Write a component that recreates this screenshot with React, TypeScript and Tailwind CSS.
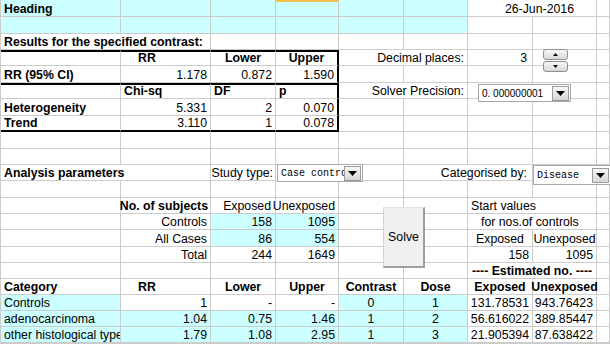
import clsx from "clsx";

type Cell = {
  t?: string;
  s?: 2; // span two columns
  a?: "l" | "r" | "c";
  b?: boolean;
  bg?: boolean;
  x?: string; // extra classes (borders, padding)
};

const TOP = "border-t-2 border-t-black";
const RIGHT = "border-r-2 border-r-black";
const BOTTOM = "border-b-2 border-b-black";

// one entry per sheet row, columns A..I
const rows: Cell[][] = [
  [
    { t: "Heading", b: true, bg: true },
    { bg: true },
    { bg: true },
    { bg: true, x: "border-t-2 border-t-[#f4c04c]" },
    { bg: true },
    { bg: true },
    { t: "26-Jun-2016", s: 2, a: "r", x: "pr-[22px]" },
  ],
  [{ bg: true }, { bg: true }, { bg: true }, { bg: true }, { bg: true }, { bg: true }],
  [{ t: "Results for the specified contrast:", s: 2, b: true }],
  [
    { x: TOP },
    { t: "RR", b: true, x: `${TOP} pl-[17px]` },
    { t: "Lower", b: true, a: "c", x: TOP },
    { t: "Upper", b: true, a: "c", x: `${TOP} ${RIGHT}` },
    { t: "Decimal places:", s: 2, a: "r" },
    { t: "3", a: "r", x: "pr-[5px]" },
  ],
  [
    { t: "RR (95% CI)", b: true },
    { t: "1.178", a: "r" },
    { t: "0.872", a: "r" },
    { t: "1.590", a: "r", x: RIGHT },
  ],
  [
    { x: TOP },
    { t: "Chi-sq", b: true, x: TOP },
    { t: "DF", b: true, x: TOP },
    { t: "p", b: true, x: `${TOP} ${RIGHT}` },
    { t: "Solver Precision:", s: 2, a: "r" },
  ],
  [
    { t: "Heterogeneity", b: true },
    { t: "5.331", a: "r" },
    { t: "2", a: "r" },
    { t: "0.070", a: "r", x: RIGHT },
  ],
  [
    { t: "Trend", b: true, x: BOTTOM },
    { t: "3.110", a: "r", x: BOTTOM },
    { t: "1", a: "r", x: BOTTOM },
    { t: "0.078", a: "r", x: `${BOTTOM} ${RIGHT}` },
  ],
  [],
  [],
  [
    { t: "Analysis parameters", s: 2, b: true },
    { t: "Study type:", a: "r", x: "pr-[2px]" },
    {},
    {},
    { t: "Categorised by:", s: 2, a: "r", x: "pr-[5px]" },
  ],
  [],
  [
    {},
    { t: "No. of subjects", b: true, a: "r", x: "pr-[2px]" },
    { t: "Exposed", a: "r", x: "pr-[4px]" },
    { t: "Unexposed", a: "r", x: "px-[1px]" },
    {},
    {},
    { t: "Start values", s: 2 },
  ],
  [
    {},
    { t: "Controls", a: "r" },
    { t: "158", a: "r", bg: true },
    { t: "1095", a: "r", bg: true },
    {},
    {},
    { t: "for nos.of controls", s: 2, x: "pl-[13px]" },
  ],
  [
    {},
    { t: "All Cases", a: "r" },
    { t: "86", a: "r", bg: true },
    { t: "554", a: "r", bg: true },
    {},
    {},
    { t: "Exposed", a: "c" },
    { t: "Unexposed", a: "c" },
  ],
  [
    {},
    { t: "Total", a: "r" },
    { t: "244", a: "r" },
    { t: "1649", a: "r" },
    {},
    {},
    { t: "158", a: "r" },
    { t: "1095", a: "r" },
  ],
  [{}, {}, {}, {}, {}, {}, { t: "---- Estimated no. ----", s: 2, a: "c", b: true }],
  [
    { t: "Category", b: true },
    { t: "RR", b: true, x: "pl-[17px]" },
    { t: "Lower", b: true, a: "c" },
    { t: "Upper", b: true, a: "c" },
    { t: "Contrast", b: true, a: "c" },
    { t: "Dose", b: true, a: "c" },
    { t: "Exposed", b: true, a: "c" },
    { t: "Unexposed", b: true, a: "c" },
  ],
  [
    { t: "Controls", bg: true },
    { t: "1", a: "r" },
    { t: "-", a: "r" },
    { t: "-", a: "r" },
    { t: "0", a: "c", bg: true },
    { t: "1", a: "c", bg: true },
    { t: "131.78531", a: "r" },
    { t: "943.76423", a: "r" },
  ],
  [
    { t: "adenocarcinoma", bg: true },
    { t: "1.04", a: "r", bg: true },
    { t: "0.75", a: "r", bg: true },
    { t: "1.46", a: "r", bg: true },
    { t: "1", a: "c", bg: true },
    { t: "2", a: "c", bg: true },
    { t: "56.616022", a: "r" },
    { t: "389.85447", a: "r" },
  ],
  [
    { t: "other histological type", bg: true, x: "overflow-hidden" },
    { t: "1.79", a: "r", bg: true },
    { t: "1.08", a: "r", bg: true },
    { t: "2.95", a: "r", bg: true },
    { t: "1", a: "c", bg: true },
    { t: "3", a: "c", bg: true },
    { t: "21.905394", a: "r" },
    { t: "87.638422", a: "r" },
  ],
  [],
];

function fill(row: Cell[]): Cell[] {
  const used = row.reduce((n, c) => n + (c.s ?? 1), 0);
  return [...row, ...Array.from({ length: Math.max(0, 9 - used) }, () => ({}))];
}

function Arrow({ up }: { up?: boolean }) {
  return (
    <svg width="5" height="3" viewBox="0 0 5 3">
      <path d={up ? "M2.5 0L5 3H0Z" : "M0 0H5L2.5 3Z"} fill="#000" />
    </svg>
  );
}

function Combo({ className, text, textClass }: { className: string; text: string; textClass: string }) {
  return (
    <div className={clsx("absolute flex items-center border border-[#a8a8a8] bg-white", className)}>
      <span className={clsx("flex-1 overflow-hidden whitespace-nowrap pl-[3px] text-black", textClass)}>{text}</span>
      <div className="mr-[1px] flex h-[15px] w-[17px] shrink-0 items-center justify-center border border-[#9c9c9c] bg-linear-to-b from-[#f5f5f5] to-[#d6d6d6]">
        <svg width="9" height="5" viewBox="0 0 9 5">
          <path d="M0 0H9L4.5 5Z" fill="#000" />
        </svg>
      </div>
    </div>
  );
}

export default function App() {
  return (
    <div className="relative h-[344px] w-[610px] overflow-hidden border-l border-[#cccccc] bg-white font-['Liberation_Sans',Arial,sans-serif] text-[12.3px] text-black">
      <div className="grid grid-cols-[120px_90px_65px_63px_65px_64px_65px_64px_13px] grid-rows-[17px_17px_16px_16px_17px_16px_17px_16px_17px_16px_16px_17px_16px_16px_17px_16px_16px_16px_16px_16px_16px_1px]">
        {rows.map((row, r) =>
          fill(row).map((c, i) => (
            <div
              key={`${r}-${i}`}
              className={clsx(
                "flex items-end whitespace-nowrap border-r border-b border-[#cccccc] px-[3px] leading-[14px]",
                c.s === 2 && "col-span-2",
                c.a === "r" && "justify-end",
                c.a === "c" && "justify-center",
                c.b && "font-bold",
                c.bg && "bg-[#ccffff]",
                c.x
              )}
            >
              {c.t}
            </div>
          ))
        )}
      </div>

      {/* decimal places spinner */}
      <div className="absolute left-[542px] top-[49px] flex w-[25px] flex-col gap-[1px]">
        <div className="flex h-[11px] items-center justify-center rounded-[3px] border border-[#8f8f8f] bg-linear-to-b from-[#f7f7f7] to-[#d9d9d9]">
          <Arrow up />
        </div>
        <div className="flex h-[11px] items-center justify-center rounded-[3px] border border-[#8f8f8f] bg-linear-to-b from-[#f7f7f7] to-[#d9d9d9]">
          <Arrow />
        </div>
      </div>

      <Combo
        className="left-[477px] top-[84px] h-[18px] w-[93px]"
        text="0. 000000001"
        textClass="font-['Liberation_Sans',Arial,sans-serif] text-[10px]"
      />
      <Combo
        className="left-[276px] top-[164px] h-[18px] w-[86px]"
        text="Case control"
        textClass="font-['Liberation_Mono',monospace] text-[10px]"
      />
      <Combo
        className="left-[532px] top-[165px] h-[20px] w-[78px]"
        text="Disease"
        textClass="font-['Liberation_Mono',monospace] text-[10px]"
      />

      {/* solve button */}
      <div className="absolute left-[382px] top-[207px] flex h-[61px] w-[42px] items-center justify-center border-t border-l border-t-[#e2e2e2] border-l-[#d4d4d4] border-r-2 border-b-2 border-r-[#9e9e9e] border-b-[#9e9e9e] bg-[#f0f0f0]">
        Solve
      </div>
    </div>
  );
}
